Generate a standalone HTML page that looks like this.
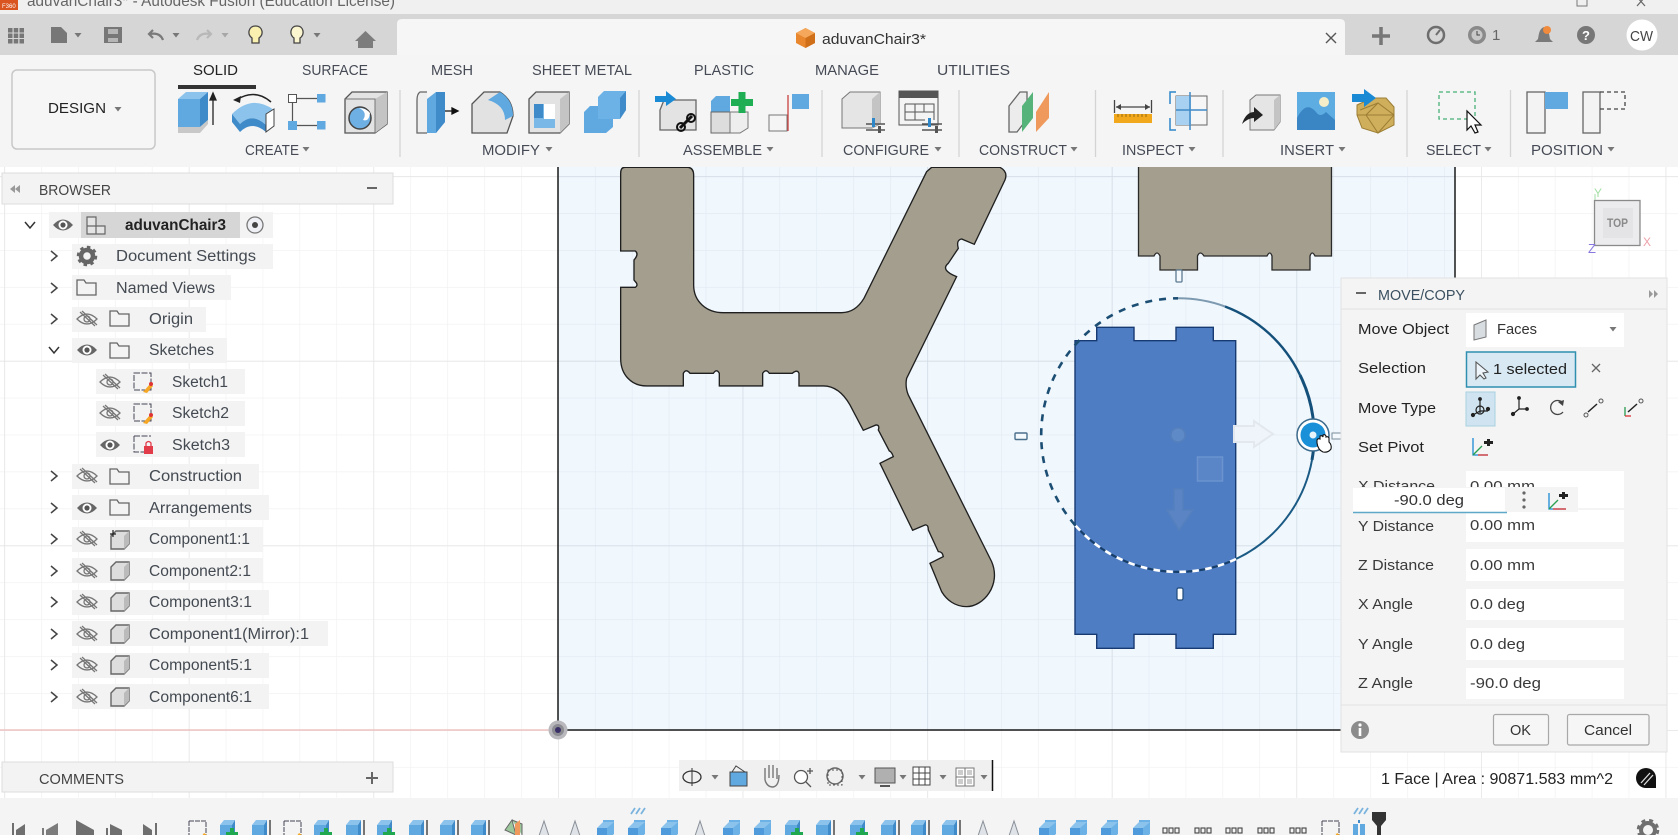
<!DOCTYPE html>
<html><head><meta charset="utf-8"><title>aduvanChair3</title>
<style>
html,body{margin:0;padding:0;background:#fff;overflow:hidden;width:1678px;height:835px}
svg{display:block;filter:blur(.35px)}
text{font-family:"Liberation Sans",sans-serif;fill:#3a3a3a;font-size:15px}
.d{fill:#222}
.tb{font-size:15px;fill:#454a55}
.r{font-size:15.5px;fill:#444a52}
</style></head><body>
<svg width="1678" height="835" viewBox="0 0 1678 835" xmlns="http://www.w3.org/2000/svg">
<defs>
<pattern id="gm" x="558" y="730" width="36.92" height="36.92" patternUnits="userSpaceOnUse"><path d="M0 0V36.92M0 0H36.92" fill="none" stroke="#f0f0f0" stroke-width="1.2"/></pattern>
<pattern id="gM" x="558" y="730" width="184.6" height="184.6" patternUnits="userSpaceOnUse"><path d="M0 0V184.6M0 0H184.6" fill="none" stroke="#e4e4e4" stroke-width="1.4"/></pattern>
<pattern id="bm" x="558" y="730" width="36.92" height="36.92" patternUnits="userSpaceOnUse"><path d="M0 0V36.92M0 0H36.92" fill="none" stroke="#e2e9f1" stroke-width="1.2"/></pattern>
<pattern id="bM" x="558" y="730" width="184.6" height="184.6" patternUnits="userSpaceOnUse"><path d="M0 0V184.6M0 0H184.6" fill="none" stroke="#d2dae4" stroke-width="1.4"/></pattern>
<g id="eye"><path d="M-10 0Q0-11 10 0Q0 11-10 0Z" fill="#666"/><circle r="4.5" fill="#fff"/><circle r="2.6" fill="#555"/></g>
<g id="eyeh" fill="none" stroke="#777" stroke-width="1.3"><path d="M-10 0Q0-10 10 0Q0 10-10 0Z"/><circle r="3"/><path d="M-7-7L8 7M-5-8L10 6"/></g>
<path id="fold" d="M0 0H7L9 3H19V15H0Z" fill="none" stroke="#666" stroke-width="1.3"/>
<g id="cube"><path d="M0 5L5 0H18V13L13 18H0Z" fill="#ddd" stroke="#666" stroke-width="1.4"/><path d="M13 5V18L18 13V0Z" fill="#bbb"/></g>
<path id="chr" d="M-3-5L3 0L-3 5" fill="none" stroke="#444" stroke-width="1.5"/>
<path id="chd" d="M-5-3L0 3L5-3" fill="none" stroke="#333" stroke-width="1.5"/>
<path id="ar" d="M-3.5-2H3.5L0 2.5Z" fill="#777"/>
<g id="tx"><path d="M0 5H12V26H0Z" fill="#5fa8e0"/><path d="M0 5L4 0H15L12 5Z" fill="#8cc3ec"/><path d="M12 5L15 0V20L12 26Z" fill="#3f8ac8"/><path d="M18 0V22" stroke="#222" stroke-width="1.2"/></g>
<g id="tp"><path d="M0 5H12V26H0Z" fill="#5fa8e0"/><path d="M0 5L4 0H15L12 5Z" fill="#8cc3ec"/><path d="M12 5L15 0V20L12 26Z" fill="#3f8ac8"/><path d="M10 8H14V12H18V16H14V20H10V16H6V12H10Z" fill="#20a850"/></g>
<g id="tc"><path d="M0 8H10V24H0Z" fill="#4f9ada"/><path d="M6 0H17V14L10 20V8H6Z" fill="#6db2e6"/><path d="M0 8L6 2H17L10 8Z" fill="#8cc3ec"/></g>
<g id="tl"><path d="M8 0L0 24H16Z" fill="#dfe3e8" stroke="#8a9098"/></g>
<g id="ts" fill="none" stroke="#444" stroke-width="1.1"><rect x="0" y="0" width="4" height="5"/><rect x="6" y="0" width="4" height="5"/><rect x="12" y="0" width="4" height="5"/></g>
<g id="tk"><path d="M1 1V20M1 1H18V20" fill="none" stroke="#445" stroke-width="1" stroke-dasharray="5 1"/><path d="M11 20L16 13L19 15L15 22Z" fill="#f5a623"/></g>
</defs>

<!-- viewport -->
<rect x="0" y="160" width="1678" height="640" fill="#fff"/>
<rect x="0" y="160" width="1678" height="640" fill="url(#gm)"/>
<rect x="0" y="160" width="1678" height="640" fill="url(#gM)"/>
<rect x="558" y="160" width="897" height="570" fill="#f0f7fd"/>
<rect x="558" y="160" width="897" height="570" fill="url(#bm)"/>
<rect x="558" y="160" width="897" height="570" fill="url(#bM)"/>
<path d="M0 730H558" stroke="#ecb8b8" stroke-width="1.2"/>
<path d="M558 160V730H1455V160" fill="none" stroke="#1a1a1a" stroke-width="1.5"/>
<circle cx="558" cy="730" r="9.5" fill="#b9b9bd"/><circle cx="558" cy="730" r="6" fill="#8b8b92"/><circle cx="558" cy="730" r="3" fill="#3a2f66"/>

<!-- part 1 -->
<g transform="translate(560 165) scale(.3333)">
<path d="M195 7H385Q401 10 401 30V360C401 410 440 443 490 443H845C875 443 897 425 912 400L1100 20L1115 7H1320Q1345 20 1335 45L1243 238L1205 222Q1188 225 1195 250L1165 295Q1140 315 1190 335L1040 640Q1035 665 1045 690L1295 1190C1325 1260 1270 1325 1220 1325C1185 1325 1160 1305 1145 1280L1110 1195L1150 1175Q1148 1160 1135 1160L1105 1095Q1105 1078 1095 1080L1058 1096L960 895L1000 875Q995 860 988 858L955 795Q960 780 948 780L910 796L870 720C850 685 825 663 790 663H717V625Q712 612 697 625H628Q618 610 608 625V663H478V625Q470 610 460 625H390Q378 610 370 625V663H260C215 663 182 630 182 580V367H226Q236 360 226 350L222 345V285L226 280Q236 266 226 258H182V25Q182 7 195 7Z" fill="#a39e8e" stroke="#1f1f1f" stroke-width="4"/>
</g>
<rect x="1015" y="433" width="12" height="6.5" rx="1" fill="#f4f9fd" stroke="#4a6f8c" stroke-width="1.4"/>

<!-- part 2 -->
<path d="M1138.5 165V256H1154Q1157 250 1160 256V270H1197.5V256Q1200 250 1204 256H1267Q1270 250 1272 256V270H1310V256Q1312 250 1315 256H1331.5V165Z" fill="#a39e8e" stroke="#2a2a2a" stroke-width="1.3"/>
<rect x="1176" y="270" width="6" height="12" rx="1" fill="#f4f9fd" stroke="#5c7a92" stroke-width="1.3"/>

<!-- blue face -->
<path d="M1075 340.7H1096.7V327.3H1134V340.7H1176V327.3H1213.3V340.7H1235.7V634.3H1213.3V648.3H1176V634.3H1134V648.3H1096.7V634.3H1075Z" fill="#4f7dc3" stroke="#173a72" stroke-width="1.4"/>
<rect x="1177" y="588" width="6" height="12" rx="1.5" fill="#fff" stroke="#1f4a7a" stroke-width="1.2"/>
<circle cx="1178" cy="435" r="7" fill="#5f8ac8" stroke="#5580bc" stroke-width="1.5"/>
<rect x="1197.5" y="457" width="25" height="24" fill="#5a85c6" stroke="#6a93cf" stroke-width="1.5"/>
<path d="M1174 489H1183V510H1193L1179 530L1167 510H1174Z" fill="#5a84c4" stroke="#5580be" stroke-width="1.5"/>
<path d="M1234 426H1254V421L1273 434L1254 447V442H1234Z" fill="#eef4f9" stroke="#e2e8ee" stroke-width="2"/>
<!-- ring -->
<path d="M1178 298.3A136.7 136.7 0 0 1 1225 306.500" fill="none" stroke="#7d9ab0" stroke-width="2"/>
<path d="M1225 306.500A136.7 136.7 0 0 1 1300 375" fill="none" stroke="#14507a" stroke-width="2.4"/>
<path d="M1300 375A136.7 136.7 0 0 1 1312 460" fill="none" stroke="#14507a" stroke-width="3"/>
<path d="M1312 460A136.7 136.7 0 0 1 1236 559" fill="none" stroke="#1a5a84" stroke-width="2"/>
<path d="M1236 559A136.7 136.7 0 0 1 1075 525" fill="none" stroke="#fff" stroke-width="2.6" stroke-dasharray="7 6"/>
<path d="M1236 559A136.7 136.7 0 0 1 1075 525" fill="none" stroke="#173f6a" stroke-width="2.2" stroke-dasharray="6 7" stroke-dashoffset="6.5"/>
<path d="M1075 525A136.7 136.7 0 0 1 1178 298.3" fill="none" stroke="#1c4e74" stroke-width="2.6" stroke-dasharray="7 7"/>
<circle cx="1313" cy="435" r="16" fill="#fff" stroke="#3b6a8c" stroke-width="1.5"/>
<circle cx="1313" cy="435" r="12.5" fill="#1a90d8"/><circle cx="1313" cy="435" r="3.5" fill="#e6f4fc"/>
<rect x="1332" y="433" width="10" height="6" fill="#f4f9fd" stroke="#7a8d9c"/>
<path d="M1317 443V440Q1318 438 1320 439V436Q1322 435 1323 437V435Q1325 434 1326 436V437Q1328 436 1329 438V442Q1332 445 1331 449Q1328 453 1323 452Q1318 450 1317 443Z" fill="#fff" stroke="#111" stroke-width="1.1"/>

<!-- title bar + tab bar + toolbar -->
<rect x="0" y="0" width="1678" height="14" fill="#f0f0f0"/>
<rect x="0" y="0" width="18" height="10" fill="#d9541e"/>
<text x="2" y="8" style="font-size:6px;fill:#fff">F360</text>
<text x="27" y="6" textLength="368" lengthAdjust="spacingAndGlyphs" style="font-size:16px;fill:#666">aduvanChair3* - Autodesk Fusion (Education License)</text>
<path d="M1577 -2H1587V6H1577Z" fill="none" stroke="#777"/>
<path d="M1637-3L1645 6M1645-3L1637 6" stroke="#666" stroke-width="1.2"/>
<rect x="0" y="14" width="1678" height="42" fill="#d6d6d6"/>
<path d="M397 56V24Q397 19 402 19H1340Q1345 19 1345 24V56Z" fill="#f6f6f6"/>
<rect x="0" y="55" width="1678" height="112" fill="#f5f5f5"/>
<g fill="#777">
<path d="M8 28h4.500v4.500h-4.500zM13.700 28h4.500v4.500h-4.500zM19.500 28h4.500v4.500h-4.500zM8 33.500h4.500v4.500h-4.500zM13.700 33.500h4.500v4.500h-4.500zM19.500 33.500h4.500v4.500h-4.500zM8 39h4.500v4.500h-4.500zM13.700 39h4.500v4.500h-4.500zM19.500 39h4.500v4.500h-4.500z"/>
<path d="M51 27H61L67 33V43H51Z"/>
<path d="M104 27H122V43H104Z"/><rect x="108" y="29" width="10" height="5" fill="#b5b5b5"/><rect x="108" y="38" width="10" height="4" fill="#b5b5b5"/>
</g>
<use href="#ar" x="78" y="35"/><use href="#ar" x="176" y="35"/><use href="#ar" x="225" y="35" opacity=".5"/><use href="#ar" x="317" y="35"/>
<path d="M163 40Q160 32 150 34M153 30L149 34L153 38" fill="none" stroke="#7a7a7a" stroke-width="2.200"/>
<path d="M197 40Q200 32 210 34M207 30L211 34L207 38" fill="none" stroke="#b8b8b8" stroke-width="2.200"/>
<path d="M255.500 26C248 26 247 35 252 38V43H259V38C264 35 263 26 255.500 26Z" fill="#faf0b0" stroke="#444" stroke-width="1.300"/>
<path d="M297 26C290 26 289 35 294 38V43H300V38C305 35 304 26 297 26Z" fill="#fbf6d0" stroke="#444" stroke-width="1.300"/>
<path d="M365.500 31L376 41H373V48H358V41H355Z" fill="#7d7d7d"/>
<path d="M805.500 28L815 33V43L805.500 48L796 43V33Z" fill="#e8872e"/><path d="M805.500 28L815 33L805.500 38L796 33Z" fill="#f5a85c"/><path d="M805.500 38L815 33V43L805.500 48Z" fill="#d06f1a"/>
<text x="822" y="44" textLength="104" lengthAdjust="spacingAndGlyphs" style="font-size:15px;fill:#333">aduvanChair3*</text>
<path d="M1326 33L1336 43M1336 33L1326 43" stroke="#555" stroke-width="1.400"/>
<path d="M1381 27V45M1372 36H1390" stroke="#777" stroke-width="3.500"/>
<circle cx="1436" cy="35" r="8" fill="none" stroke="#6e6e6e" stroke-width="2.500"/><path d="M1436 35L1440 30" stroke="#6e6e6e" stroke-width="2"/>
<circle cx="1477" cy="35" r="9" fill="#8a8a8a"/><circle cx="1477" cy="35" r="5.500" fill="#c8c8c8"/><path d="M1477 31V35H1480" stroke="#444" fill="none"/>
<text x="1492" y="40" style="font-size:15px;fill:#666">1</text>
<path d="M1544 27C1539 29 1539 34 1538 39L1535 42H1553L1550 39C1549 34 1549 29 1544 27Z" fill="#7a7a7a"/><circle cx="1547" cy="30" r="4" fill="#f08a3c"/>
<circle cx="1586" cy="35" r="9" fill="#777"/><text x="1582" y="40" style="font-size:13px;fill:#fff;font-weight:bold">?</text>
<circle cx="1642" cy="35" r="15.500" fill="#fff"/><text x="1630" y="41" textLength="23" lengthAdjust="spacingAndGlyphs" style="font-size:15px;fill:#444">CW</text>

<rect x="12" y="70" width="143" height="79" rx="5" fill="#f6f6f6" stroke="#c8c8c8" stroke-width="1.500"/>
<text x="48" y="113" textLength="58" lengthAdjust="spacingAndGlyphs" class="d" style="font-size:15px">DESIGN</text><use href="#ar" x="118" y="109"/>

<text class="d" x="193" y="75" textLength="45" lengthAdjust="spacingAndGlyphs">SOLID</text>
<rect x="178" y="85" width="78" height="4" fill="#333"/>
<g class="tb">
<text class="tb" x="302" y="75" textLength="66" lengthAdjust="spacingAndGlyphs">SURFACE</text>
<text class="tb" x="431" y="75" textLength="42" lengthAdjust="spacingAndGlyphs">MESH</text>
<text class="tb" x="532" y="75" textLength="100" lengthAdjust="spacingAndGlyphs">SHEET METAL</text>
<text class="tb" x="694" y="75" textLength="60" lengthAdjust="spacingAndGlyphs">PLASTIC</text>
<text class="tb" x="815" y="75" textLength="64" lengthAdjust="spacingAndGlyphs">MANAGE</text>
<text class="tb" x="937" y="75" textLength="73" lengthAdjust="spacingAndGlyphs">UTILITIES</text>
<text class="tb" x="245" y="155" textLength="54" lengthAdjust="spacingAndGlyphs">CREATE</text>
<text class="tb" x="482" y="155" textLength="58" lengthAdjust="spacingAndGlyphs">MODIFY</text>
<text class="tb" x="683" y="155" textLength="79" lengthAdjust="spacingAndGlyphs">ASSEMBLE</text>
<text class="tb" x="843" y="155" textLength="86" lengthAdjust="spacingAndGlyphs">CONFIGURE</text>
<text class="tb" x="979" y="155" textLength="88" lengthAdjust="spacingAndGlyphs">CONSTRUCT</text>
<text class="tb" x="1122" y="155" textLength="62" lengthAdjust="spacingAndGlyphs">INSPECT</text>
<text class="tb" x="1280" y="155" textLength="54" lengthAdjust="spacingAndGlyphs">INSERT</text>
<text class="tb" x="1426" y="155" textLength="55" lengthAdjust="spacingAndGlyphs">SELECT</text>
<text class="tb" x="1531" y="155" textLength="72" lengthAdjust="spacingAndGlyphs">POSITION</text>
</g>
<use href="#ar" x="306" y="149"/><use href="#ar" x="549" y="149"/><use href="#ar" x="770" y="149"/><use href="#ar" x="938" y="149"/><use href="#ar" x="1074" y="149"/><use href="#ar" x="1192" y="149"/><use href="#ar" x="1342" y="149"/><use href="#ar" x="1488" y="149"/><use href="#ar" x="1611" y="149"/>
<path d="M400 90V157M639 90V157M822 90V157M959 90V157M1095.500 90V157M1223 90V157M1407 90V157M1510.500 90V157" stroke="#d4d4d4" stroke-width="1.300"/>

<!-- create icons -->
<path d="M178 99H200V127H178Z" fill="#5fa8e0"/><path d="M178 99L186 92H208L200 99Z" fill="#8cc3ec"/><path d="M200 99L208 92V120L200 127Z" fill="#3f8ac8"/><path d="M178 127H200L208 120V124L200 133H178Z" fill="#c8c8c8"/>
<path d="M213 125V95M210 100L213 93L216 100Z" stroke="#222" stroke-width="1.300" fill="#222"/>
<path d="M236 100Q255 88 271 102" fill="none" stroke="#222" stroke-width="1.500"/><path d="M233 100L241 96L240 103Z" fill="#222"/>
<path d="M232 114Q252 94 274 110L266 125Q252 112 240 124Z" fill="#8cc3ec"/><path d="M232 114V122L240 132Q252 120 266 132V125Q252 112 240 124Z" fill="#3f8ac8"/><path d="M266 114L274 109V126L266 132Z" fill="#fff" stroke="#444"/>
<rect x="288.500" y="94.500" width="8" height="8" fill="#fff" stroke="#555"/><rect x="317" y="94" width="8.500" height="8.500" fill="#5fa8e0"/><rect x="288" y="121" width="9" height="9" fill="#5fa8e0"/><rect x="317" y="121" width="8.500" height="8.500" fill="#5fa8e0"/>
<path d="M297 98.500H317M292.500 103V121M297 125.500H317" stroke="#555" stroke-width="1.200"/>
<path d="M345 99L352 92H387V124L375 133H345Z" fill="#e3e3e3" stroke="#555" stroke-width="1.300"/><path d="M375 99L387 92V124L375 133Z" fill="#c4c4c4"/><path d="M345 99H375V133" fill="none" stroke="#777" stroke-width="1"/>
<circle cx="360" cy="118" r="11" fill="#6fb0e4" stroke="#444" stroke-width="1.500"/><path d="M359 108Q368 112 363 120Q369 122 370 113Q366 108 359 108Z" fill="#fff"/>

<!-- modify icons -->
<path d="M427 92H420Q417 94 417 100V133H427" fill="#eee" stroke="#666" stroke-width="1.300"/><path d="M427 99L436 92H445V122L436 133H427Z" fill="#5fa8e0"/><path d="M436 92H445V122L436 133Z" fill="#3f8ac8"/><path d="M445 111H456M452 108L458 111L452 114Z" stroke="#111" stroke-width="1.300" fill="#111"/>
<path d="M472 104L484 92H500Q513 100 513 116L507 133H472Z" fill="#e2e2e2" stroke="#555" stroke-width="1.300"/><path d="M488 100L500 92Q513 100 513 116L505 120Q505 105 488 100Z" fill="#5fa8e0"/>
<path d="M529 99L536 92H569V124L560 133H529Z" fill="#e3e3e3" stroke="#555" stroke-width="1.300"/><path d="M560 99L569 92V124L560 133Z" fill="#c4c4c4"/><rect x="534" y="104" width="21" height="24" fill="#fff"/><path d="M534 104H544V119H555V128H534Z" fill="#7ab8e8"/><path d="M534 104H543V118H534Z" fill="#3f8ac8"/>
<path d="M584 112L590 106H598V119H613V127L606 133H584Z" fill="#5fa8e0"/><path d="M598 97L604 91H626V110L620 119H598Z" fill="#6db2e6"/><path d="M620 98L626 91V110L620 119Z" fill="#3f8ac8"/>

<!-- assemble icons -->
<path d="M664 100H696V130H660V110Z" fill="#e3e3e3" stroke="#666" stroke-width="1.300"/>
<path d="M655 96H666V91L676 99L666 106V102H655Z" fill="#1a8ad4"/>
<path d="M680 128L692 116" stroke="#111" stroke-width="3"/><circle cx="681" cy="127" r="4" fill="none" stroke="#111" stroke-width="2"/><circle cx="691" cy="118" r="4" fill="none" stroke="#111" stroke-width="2"/>
<path d="M711 101L716 96H730V112H711Z" fill="#5fa8e0"/><path d="M711 112H730V133H711Z" fill="#ddd" stroke="#666"/><path d="M730 112H748V128L740 133H730Z" fill="#eee" stroke="#777"/>
<path d="M738.500 92H745.500V99H753V106H745.500V113H738.500V106H731V99H738.500Z" fill="#1fae54"/>
<rect x="769" y="115" width="18" height="16" fill="#f5f5f5" stroke="#777"/><path d="M788 95V131" stroke="#c94040" stroke-width="1.300"/><rect x="792" y="94" width="17" height="15" fill="#5fa8e0"/>

<!-- configure -->
<path d="M842 99L850 92H880V124L872 128H842Z" fill="#e5e5e5" stroke="#777"/><path d="M872 99L880 92V124L872 128Z" fill="#c4c4c4"/>
<path d="M866 124H885M866 130H885" stroke="#555" stroke-width="1.500"/><rect x="872" y="118" width="3" height="9" fill="#2e87c8"/><rect x="878" y="126" width="3" height="7" fill="#555"/>
<rect x="899" y="91" width="39" height="34" fill="#f4f4f4" stroke="#555"/><rect x="899" y="91" width="39" height="7" fill="#555"/>
<path d="M905 104H934V120M905 104V120H925M915 104V120M905 112H934M924 104V112" fill="none" stroke="#555"/>
<path d="M922 124H942M922 130H942" stroke="#555" stroke-width="1.500"/><rect x="928" y="118" width="3" height="9" fill="#2e87c8"/><rect x="935" y="126" width="3" height="7" fill="#555"/>

<!-- construct -->
<path d="M1009 106L1020 92H1027V119L1017 132H1009Z" fill="#ececec" stroke="#666" stroke-width="1.300"/>
<path d="M1022 106L1033 92V118L1022 132Z" fill="#56b37a"/><path d="M1036 112L1049 92V118L1036 132Z" fill="#ef9a5c"/>

<!-- inspect -->
<path d="M1114.500 100V113M1151.500 100V113M1116 107H1150" stroke="#444" stroke-width="1.300"/><path d="M1116 107L1121 104V110ZM1150 107L1145 104V110Z" fill="#444"/>
<rect x="1114" y="114" width="38" height="9" fill="#f2a81c"/><path d="M1118 114v3M1122 114v3M1126 114v3M1130 114v3M1134 114v3M1138 114v3M1142 114v3M1146 114v3" stroke="#9a6a10"/>
<rect x="1176" y="96" width="31" height="29" fill="#f6f6f6" stroke="#666"/><rect x="1176" y="96" width="15" height="29" fill="#a8d0f0"/><path d="M1190 92V130M1176 110H1207" stroke="#3f8ac8" stroke-width="1.500"/>
<path d="M1176 92H1170V104M1170 118V130H1176" fill="none" stroke="#2e87c8" stroke-width="1.500"/>

<!-- insert -->
<path d="M1250 100L1256 95H1280V122L1274 130H1250Z" fill="#e5e5e5" stroke="#777"/><path d="M1274 100L1280 95V122L1274 130Z" fill="#c4c4c4"/>
<path d="M1242 124Q1246 112 1254 112V107L1263 115L1254 122V118Q1248 118 1242 124Z" fill="#222"/>
<rect x="1297" y="92" width="38" height="38" fill="#5dade2"/><path d="M1297 130V118Q1306 100 1316 112Q1320 118 1326 112L1335 120V130Z" fill="#3a86c4"/><circle cx="1324" cy="102" r="5" fill="#f6eec8"/>
<path d="M1357 105L1372 98H1386L1394 107V125L1378 133L1362 128L1357 115Z" fill="#cfae5c" stroke="#9c7e34"/><path d="M1360 110L1378 103L1394 115L1378 133L1366 115L1378 103M1357 115L1394 115" fill="none" stroke="#9c7e34"/>
<path d="M1352 94H1364V89L1376 98L1364 107V102H1352Z" fill="#1a8ad4"/>

<!-- select & position -->
<rect x="1439" y="92" width="36" height="27" fill="none" stroke="#49b078" stroke-width="1.300" stroke-dasharray="4 3"/>
<path d="M1467 111V130L1471 126L1475 133L1478 132L1475 125L1481 125Z" fill="#fff" stroke="#111" stroke-width="1.200"/>
<rect x="1527" y="92" width="18" height="41" fill="#f3f3f3" stroke="#666" stroke-width="1.300"/><rect x="1545" y="92" width="23" height="17" fill="#5fa8e0"/>
<rect x="1583" y="92" width="17" height="41" fill="#f3f3f3" stroke="#666" stroke-width="1.300"/><path d="M1600 92H1625V109H1600" fill="none" stroke="#444" stroke-width="1.300" stroke-dasharray="4 3"/>

<!-- browser -->
<rect x="2" y="173" width="391" height="31" fill="#f3f3f3" stroke="#dcdcdc"/>
<path d="M15 185L10 189L15 193ZM20 185L15 189L20 193Z" fill="#999"/>
<text x="39" y="195" textLength="72" lengthAdjust="spacingAndGlyphs" style="font-size:15px;fill:#444">BROWSER</text>
<path d="M367 188H377" stroke="#666" stroke-width="2"/>

<g fill="#f3f3f3">
<rect x="49" y="212" width="224" height="26"/><rect x="72" y="244" width="201" height="25"/><rect x="72" y="275" width="159" height="25"/><rect x="72" y="307" width="134" height="25"/><rect x="72" y="338" width="155" height="25"/>
<rect x="96" y="369" width="149" height="25"/><rect x="96" y="401" width="149" height="25"/><rect x="96" y="432" width="149" height="25"/>
<rect x="72" y="464" width="187" height="25"/><rect x="72" y="495" width="197" height="25"/><rect x="72" y="527" width="191" height="25"/><rect x="72" y="558" width="191" height="25"/><rect x="72" y="590" width="197" height="25"/><rect x="72" y="621" width="256" height="25"/><rect x="72" y="653" width="197" height="25"/><rect x="72" y="684" width="197" height="25"/>
</g>
<rect x="81" y="212" width="159" height="26" fill="#d6d6d6"/>
<use href="#chd" x="30" y="225"/><use href="#chr" x="54" y="256"/><use href="#chr" x="54" y="288"/><use href="#chr" x="54" y="319"/><use href="#chd" x="54" y="350"/><use href="#chr" x="54" y="476"/><use href="#chr" x="54" y="508"/><use href="#chr" x="54" y="539"/><use href="#chr" x="54" y="571"/><use href="#chr" x="54" y="602"/><use href="#chr" x="54" y="634"/><use href="#chr" x="54" y="665"/><use href="#chr" x="54" y="697"/>
<use href="#eye" x="63" y="225"/>
<path d="M87 217H96V226H105V234H87Z" fill="#e4e4e4" stroke="#666" stroke-width="1.200"/><path d="M87 226H96V234" fill="none" stroke="#666" stroke-width="1.200"/>
<circle cx="255" cy="225" r="8" fill="#eef0f6" stroke="#777" stroke-width="1.300"/><circle cx="255" cy="225" r="3" fill="#444"/>
<circle cx="87" cy="256" r="6" fill="none" stroke="#666" stroke-width="4.500"/><circle cx="87" cy="256" r="9" fill="none" stroke="#666" stroke-width="2.500" stroke-dasharray="3.500 3.500"/>
<use href="#fold" x="77" y="280"/>
<use href="#eyeh" x="87" y="319"/><use href="#fold" x="110" y="311"/>
<use href="#eye" x="87" y="350"/><use href="#fold" x="110" y="343"/>
<use href="#eyeh" x="110" y="382"/><use href="#eyeh" x="110" y="413"/><use href="#eye" x="110" y="445"/>
<g><rect x="134" y="373" width="17" height="17" fill="none" stroke="#445" stroke-dasharray="6 1.500"/><path d="M143 392L150 384L153 386L147 393Z" fill="#f5a623"/><circle cx="151" cy="384" r="2" fill="#d33"/></g>
<g><rect x="134" y="404" width="17" height="17" fill="none" stroke="#445" stroke-dasharray="6 1.500"/><path d="M143 423L150 415L153 417L147 424Z" fill="#f5a623"/><circle cx="151" cy="415" r="2" fill="#d33"/></g>
<g><path d="M134 436V452H144M134 436H151" fill="none" stroke="#445" stroke-dasharray="6 1.500"/><rect x="144" y="446" width="9" height="8" fill="#e23b4a"/><path d="M146 446V443Q148.500 440 151 443V446" fill="none" stroke="#e23b4a" stroke-width="1.300"/></g>
<use href="#eyeh" x="87" y="476"/><use href="#fold" x="110" y="469"/>
<use href="#eye" x="87" y="508"/><use href="#fold" x="110" y="500"/>
<use href="#eyeh" x="87" y="539"/><use href="#cube" x="111" y="531"/><path d="M113 530V537M110 534H116" stroke="#222" stroke-width="1.200"/>
<use href="#eyeh" x="87" y="571"/><use href="#cube" x="111" y="562"/>
<use href="#eyeh" x="87" y="602"/><use href="#cube" x="111" y="593"/>
<use href="#eyeh" x="87" y="634"/><use href="#cube" x="111" y="625"/>
<use href="#eyeh" x="87" y="665"/><use href="#cube" x="111" y="656"/>
<use href="#eyeh" x="87" y="697"/><use href="#cube" x="111" y="688"/>

<text x="125" y="230" textLength="101" lengthAdjust="spacingAndGlyphs" style="font-size:15.500px;fill:#222;font-weight:bold">aduvanChair3</text>
<text class="r" x="116" y="261" textLength="140" lengthAdjust="spacingAndGlyphs">Document Settings</text>
<text class="r" x="116" y="293" textLength="99" lengthAdjust="spacingAndGlyphs">Named Views</text>
<text class="r" x="149" y="324" textLength="44" lengthAdjust="spacingAndGlyphs">Origin</text>
<text class="r" x="149" y="355" textLength="65" lengthAdjust="spacingAndGlyphs">Sketches</text>
<text class="r" x="172" y="387" textLength="56" lengthAdjust="spacingAndGlyphs">Sketch1</text>
<text class="r" x="172" y="418" textLength="57" lengthAdjust="spacingAndGlyphs">Sketch2</text>
<text class="r" x="172" y="450" textLength="58" lengthAdjust="spacingAndGlyphs">Sketch3</text>
<text class="r" x="149" y="481" textLength="93" lengthAdjust="spacingAndGlyphs">Construction</text>
<text class="r" x="149" y="513" textLength="103" lengthAdjust="spacingAndGlyphs">Arrangements</text>
<text class="r" x="149" y="544" textLength="101" lengthAdjust="spacingAndGlyphs">Component1:1</text>
<text class="r" x="149" y="576" textLength="102" lengthAdjust="spacingAndGlyphs">Component2:1</text>
<text class="r" x="149" y="607" textLength="103" lengthAdjust="spacingAndGlyphs">Component3:1</text>
<text class="r" x="149" y="639" textLength="160" lengthAdjust="spacingAndGlyphs">Component1(Mirror):1</text>
<text class="r" x="149" y="670" textLength="103" lengthAdjust="spacingAndGlyphs">Component5:1</text>
<text class="r" x="149" y="702" textLength="103" lengthAdjust="spacingAndGlyphs">Component6:1</text>

<!-- comments -->
<rect x="2" y="762" width="391" height="30" fill="#f3f3f3" stroke="#dcdcdc"/>
<text x="39" y="784" textLength="85" lengthAdjust="spacingAndGlyphs" style="font-size:15px;fill:#444">COMMENTS</text>
<path d="M372 772V784M366 778H378" stroke="#666" stroke-width="2"/>

<!-- nav bar -->
<rect x="679" y="760" width="313" height="31" fill="#f0f0f0"/>
<path d="M992.500 760V791" stroke="#111" stroke-width="1.500"/>
<ellipse cx="692" cy="777" rx="9" ry="6" fill="none" stroke="#333" stroke-width="1.300"/><path d="M692 768V786" stroke="#333"/>
<use href="#ar" x="715" y="777"/>
<rect x="730" y="772" width="17" height="14" fill="#5fa8e0" stroke="#444"/><path d="M732 772L736 766L745 772" fill="none" stroke="#444"/>
<path d="M765 768V780M769 765V778M773 765V778M777 768V779M765 780Q767 787 773 787Q779 786 779 775" fill="none" stroke="#777" stroke-width="1.400"/>
<circle cx="801" cy="777" r="6.500" fill="#fff" stroke="#555" stroke-width="1.300"/><path d="M806 782L811 787M810 768V774M807 771H813" stroke="#555" stroke-width="1.300"/>
<circle cx="835" cy="776" r="8" fill="none" stroke="#666" stroke-width="1.500"/><rect x="828" y="770" width="14" height="15" fill="none" stroke="#555" stroke-dasharray="2 2"/>
<use href="#ar" x="862" y="777"/>
<rect x="875" y="768" width="20" height="15" fill="#b0b0b0" stroke="#555"/><path d="M880 786H890" stroke="#555" stroke-width="2"/>
<use href="#ar" x="903" y="777"/>
<rect x="913" y="767" width="17" height="18" fill="#fff" stroke="#444"/><path d="M919 767V785M925 767V785M913 773H930M913 779H930" stroke="#444"/>
<use href="#ar" x="943" y="777"/>
<rect x="956" y="768" width="18" height="18" fill="#fff" stroke="#777"/><path d="M965 768V786M956 777H974" stroke="#777"/><rect x="958" y="770" width="5" height="5" fill="#ccc"/><rect x="967" y="770" width="5" height="5" fill="#ccc"/><rect x="958" y="779" width="5" height="5" fill="#ccc"/><rect x="967" y="779" width="5" height="5" fill="#ccc"/>
<use href="#ar" x="984" y="777"/>

<!-- status -->
<text x="1381" y="784" textLength="232" lengthAdjust="spacingAndGlyphs" style="font-size:15.500px;fill:#222">1 Face | Area : 90871.583 mm^2</text>
<path d="M1646 768A10 10 0 0 1 1656 778V788H1646A10 10 0 0 1 1646 768Z" fill="#111"/><path d="M1641 783L1650 773M1644 785L1653 775" stroke="#ddd" stroke-width="1.300"/>

<!-- view cube -->
<rect x="1594.500" y="200.500" width="45.500" height="45" fill="#ececee" stroke="#8a8a8a" stroke-width="1.300"/>
<rect x="1603" y="208" width="30" height="30" fill="#e4e4e6"/>
<text x="1607" y="227" textLength="21" lengthAdjust="spacingAndGlyphs" style="font-size:12px;fill:#8a8a8a;font-weight:bold">TOP</text>
<path d="M1595 200V194" stroke="#a5dca5"/><text x="1594" y="197" style="font-size:12px;fill:#a5e0a5">Y</text>
<text x="1643" y="246" style="font-size:12px;fill:#eda0a8">X</text>
<text x="1588" y="253" style="font-size:13px;fill:#8a78e0">Z</text>

<!-- Move/Copy panel -->
<rect x="1341" y="278" width="326" height="474" fill="#f4f4f4" stroke="#e2e2e2"/>
<path d="M1341 309H1667M1341 705H1667" stroke="#e2e2e2"/>
<path d="M1356 293H1366" stroke="#666" stroke-width="2"/>
<text x="1378" y="300" textLength="87" lengthAdjust="spacingAndGlyphs" style="font-size:15px;fill:#3b5060">MOVE/COPY</text>
<path d="M1649 290L1653 294L1649 298ZM1654 290L1658 294L1654 298Z" fill="#999"/>
<text class="d" x="1358" y="334" textLength="91" lengthAdjust="spacingAndGlyphs">Move Object</text>
<text class="d" x="1358" y="373" textLength="68" lengthAdjust="spacingAndGlyphs">Selection</text>
<text class="d" x="1358" y="413" textLength="78" lengthAdjust="spacingAndGlyphs">Move Type</text>
<text class="d" x="1358" y="452" textLength="66" lengthAdjust="spacingAndGlyphs">Set Pivot</text>
<text x="1358" y="491" textLength="77" lengthAdjust="spacingAndGlyphs">X Distance</text>
<text x="1358" y="531" textLength="76" lengthAdjust="spacingAndGlyphs">Y Distance</text>
<text x="1358" y="570" textLength="76" lengthAdjust="spacingAndGlyphs">Z Distance</text>
<text x="1358" y="609" textLength="55" lengthAdjust="spacingAndGlyphs">X Angle</text>
<text x="1358" y="649" textLength="55" lengthAdjust="spacingAndGlyphs">Y Angle</text>
<text x="1358" y="688" textLength="55" lengthAdjust="spacingAndGlyphs">Z Angle</text>
<rect x="1466" y="313" width="158" height="34" fill="#fff"/>
<path d="M1474 325L1486 320V337L1474 340Z" fill="#d8dde2" stroke="#777"/>
<text x="1497" y="334" textLength="40" lengthAdjust="spacingAndGlyphs" style="font-size:15px;fill:#333">Faces</text>
<use href="#ar" x="1613" y="329"/>
<rect x="1466.500" y="352" width="109" height="35" fill="#d8e9f3" stroke="#2e8fb0" stroke-width="1.500"/>
<path d="M1476 362V379L1480 375L1484 379L1486 378L1483 373L1488 372Z" fill="#eef6fb" stroke="#555" stroke-width="1.100"/>
<text x="1493" y="374" textLength="74" lengthAdjust="spacingAndGlyphs" style="font-size:15px;fill:#222">1 selected</text>
<path d="M1592 364L1600 372M1600 364L1592 372" stroke="#666" stroke-width="1.300"/>
<rect x="1466" y="392" width="29" height="34" fill="#cfe4f0" stroke="#a9cfe0"/>
<g stroke="#222" fill="#222" stroke-width="1.200">
<path d="M1480 399V413M1480 411L1473 415M1480 411L1488 411" fill="none"/><circle cx="1480" cy="410" r="4" fill="none"/><circle cx="1480" cy="399" r="1.300"/><circle cx="1473" cy="415" r="1.500"/><circle cx="1488" cy="409" r="1.500"/>
<path d="M1519 398V409M1519 409L1513 414M1519 409H1527" fill="none"/><circle cx="1519" cy="398" r="1.300"/><circle cx="1513" cy="414" r="1.500"/><circle cx="1527" cy="409" r="1.300"/>
</g>
<path d="M1562 402A7 7 0 1 0 1563 412" fill="none" stroke="#444" stroke-width="1.300"/><path d="M1558 402L1564 400L1563 406Z" fill="#444"/>
<path d="M1588 412L1597 404" stroke="#222" stroke-width="1.500"/><circle cx="1586" cy="415" r="2" fill="none" stroke="#555"/><circle cx="1601" cy="401" r="2" fill="none" stroke="#555"/>
<path d="M1628 412L1637 404" stroke="#222" stroke-width="1.500"/><circle cx="1641" cy="401" r="2" fill="none" stroke="#555"/><path d="M1625 407V416" stroke="#2a9a50" stroke-width="1.300"/><path d="M1625 416H1631" stroke="#d33" stroke-width="1.300"/>
<path d="M1473 438V455H1488" fill="none" stroke="#1a8ad4" stroke-width="1.300"/><path d="M1473 455L1482 446" stroke="#2aa050" stroke-width="1.300"/><path d="M1478 455H1488" stroke="#d33" stroke-width="1.300"/><path d="M1484 441h3v-2h3v2h3v3h-3v2h-3v-2h-3z" fill="#222"/>
<g fill="#fff"><rect x="1466" y="471" width="158" height="37"/><rect x="1466" y="510" width="158" height="32"/><rect x="1466" y="549" width="158" height="32"/><rect x="1466" y="589" width="158" height="31"/><rect x="1466" y="628" width="158" height="32"/><rect x="1466" y="668" width="158" height="31"/></g>
<text x="1470" y="491" textLength="65" lengthAdjust="spacingAndGlyphs">0.00 mm</text>
<text x="1470" y="530" textLength="65" lengthAdjust="spacingAndGlyphs">0.00 mm</text>
<text x="1470" y="570" textLength="65" lengthAdjust="spacingAndGlyphs">0.00 mm</text>
<text x="1470" y="609" textLength="55" lengthAdjust="spacingAndGlyphs">0.0 deg</text>
<text x="1470" y="649" textLength="55" lengthAdjust="spacingAndGlyphs">0.0 deg</text>
<text x="1470" y="688" textLength="71" lengthAdjust="spacingAndGlyphs">-90.0 deg</text>
<rect x="1353" y="487" width="225" height="25" fill="#f4f4f4"/>
<rect x="1353" y="488" width="152" height="24" fill="#fff"/>
<path d="M1353 512.500H1507" stroke="#5fa8c8" stroke-width="1.500"/>
<text x="1394" y="505" textLength="70" lengthAdjust="spacingAndGlyphs" style="font-size:15px;fill:#333">-90.0 deg</text>
<circle cx="1524" cy="493" r="1.600" fill="#666"/><circle cx="1524" cy="500" r="1.600" fill="#666"/><circle cx="1524" cy="507" r="1.600" fill="#666"/>
<path d="M1549 493V509H1566" fill="none" stroke="#1a8ad4" stroke-width="1.300"/><path d="M1549 509L1558 500" stroke="#2aa050" stroke-width="1.300"/><path d="M1553 509H1566" stroke="#d33" stroke-width="1.300"/><path d="M1559 494h3v-2h3v2h3v3h-3v2h-3v-2h-3z" fill="#222"/>
<circle cx="1360" cy="730" r="9" fill="#8c8c8c"/><rect x="1358.700" y="728" width="2.600" height="8" fill="#fff"/><circle cx="1360" cy="725" r="1.600" fill="#fff"/>
<rect x="1493.500" y="714.500" width="55" height="30.500" rx="2" fill="#f6f6f6" stroke="#a8a8a8" stroke-width="1.200"/>
<text x="1510" y="735" textLength="21" lengthAdjust="spacingAndGlyphs" style="font-size:15px;fill:#333">OK</text>
<rect x="1567.500" y="714.500" width="81.500" height="30.500" rx="2" fill="#f6f6f6" stroke="#a8a8a8" stroke-width="1.200"/>
<text x="1584" y="735" textLength="48" lengthAdjust="spacingAndGlyphs" style="font-size:15px;fill:#333">Cancel</text>

<!-- timeline -->
<rect x="0" y="798" width="1678" height="37" fill="#f4f4f4"/>
<g fill="#6f6f6f">
<path d="M12 823H14V835H12ZM25 824L16 830V835H25Z"/>
<path d="M58 823L46 830V835H58ZM42 828H44V835H42Z" opacity=".9"/>
<path d="M76 820L94 830V835H76Z"/>
<path d="M110 824L122 830V835H110ZM106 828H108V835H106Z"/>
<path d="M143 824L152 830V835H143ZM155 823H157V835H155Z"/>
</g>
<use href="#tk" x="188" y="820"/><use href="#tp" x="220" y="820"/><use href="#tx" x="252" y="820"/><use href="#tk" x="283" y="820"/><use href="#tp" x="314" y="820"/><use href="#tx" x="346" y="820"/><use href="#tp" x="377" y="820"/><use href="#tx" x="409" y="820"/><use href="#tx" x="440" y="820"/><use href="#tx" x="471" y="820"/>
<path d="M505 830L512 820L516 835ZM512 820L522 824V835" fill="#9cc79c" stroke="#666"/><path d="M515 824L520 820V835H515Z" fill="#ef9a5c"/>
<use href="#tl" x="536" y="821"/><use href="#tl" x="567" y="821"/><use href="#tc" x="597" y="820"/><use href="#tc" x="628" y="820"/><use href="#tc" x="661" y="820"/><use href="#tl" x="692" y="821"/><use href="#tc" x="723" y="820"/><use href="#tc" x="754" y="820"/><use href="#tp" x="785" y="820"/><use href="#tx" x="816" y="820"/>
<use href="#tp" x="850" y="820"/><use href="#tx" x="881" y="820"/><use href="#tx" x="911" y="820"/><use href="#tx" x="942" y="820"/><use href="#tl" x="975" y="821"/><use href="#tl" x="1006" y="821"/><use href="#tc" x="1039" y="820"/><use href="#tc" x="1070" y="820"/><use href="#tc" x="1101" y="820"/><use href="#tc" x="1133" y="820"/>
<use href="#ts" x="1163" y="828"/><use href="#ts" x="1195" y="828"/><use href="#ts" x="1226" y="828"/><use href="#ts" x="1258" y="828"/><use href="#ts" x="1290" y="828"/>
<use href="#tk" x="1321" y="820"/>
<path d="M1353 824H1358V835H1353ZM1360 824H1365V835H1360Z" fill="#5fa8e0"/><path d="M1359 820V823" stroke="#3f8ac8" stroke-width="2"/>
<path d="M1372 812H1386V820L1381 826V835H1377V826L1372 820Z" fill="#333"/>
<path d="M631 814L635 808M636 814L640 808M641 814L645 808M1354 814L1358 808M1359 814L1363 808M1364 814L1368 808" stroke="#7ab4de" stroke-width="1.800"/>
<circle cx="1648" cy="830" r="7" fill="none" stroke="#6f6f6f" stroke-width="4"/><circle cx="1648" cy="830" r="10" fill="none" stroke="#6f6f6f" stroke-width="2.500" stroke-dasharray="4 4"/>
</svg>
</body></html>
